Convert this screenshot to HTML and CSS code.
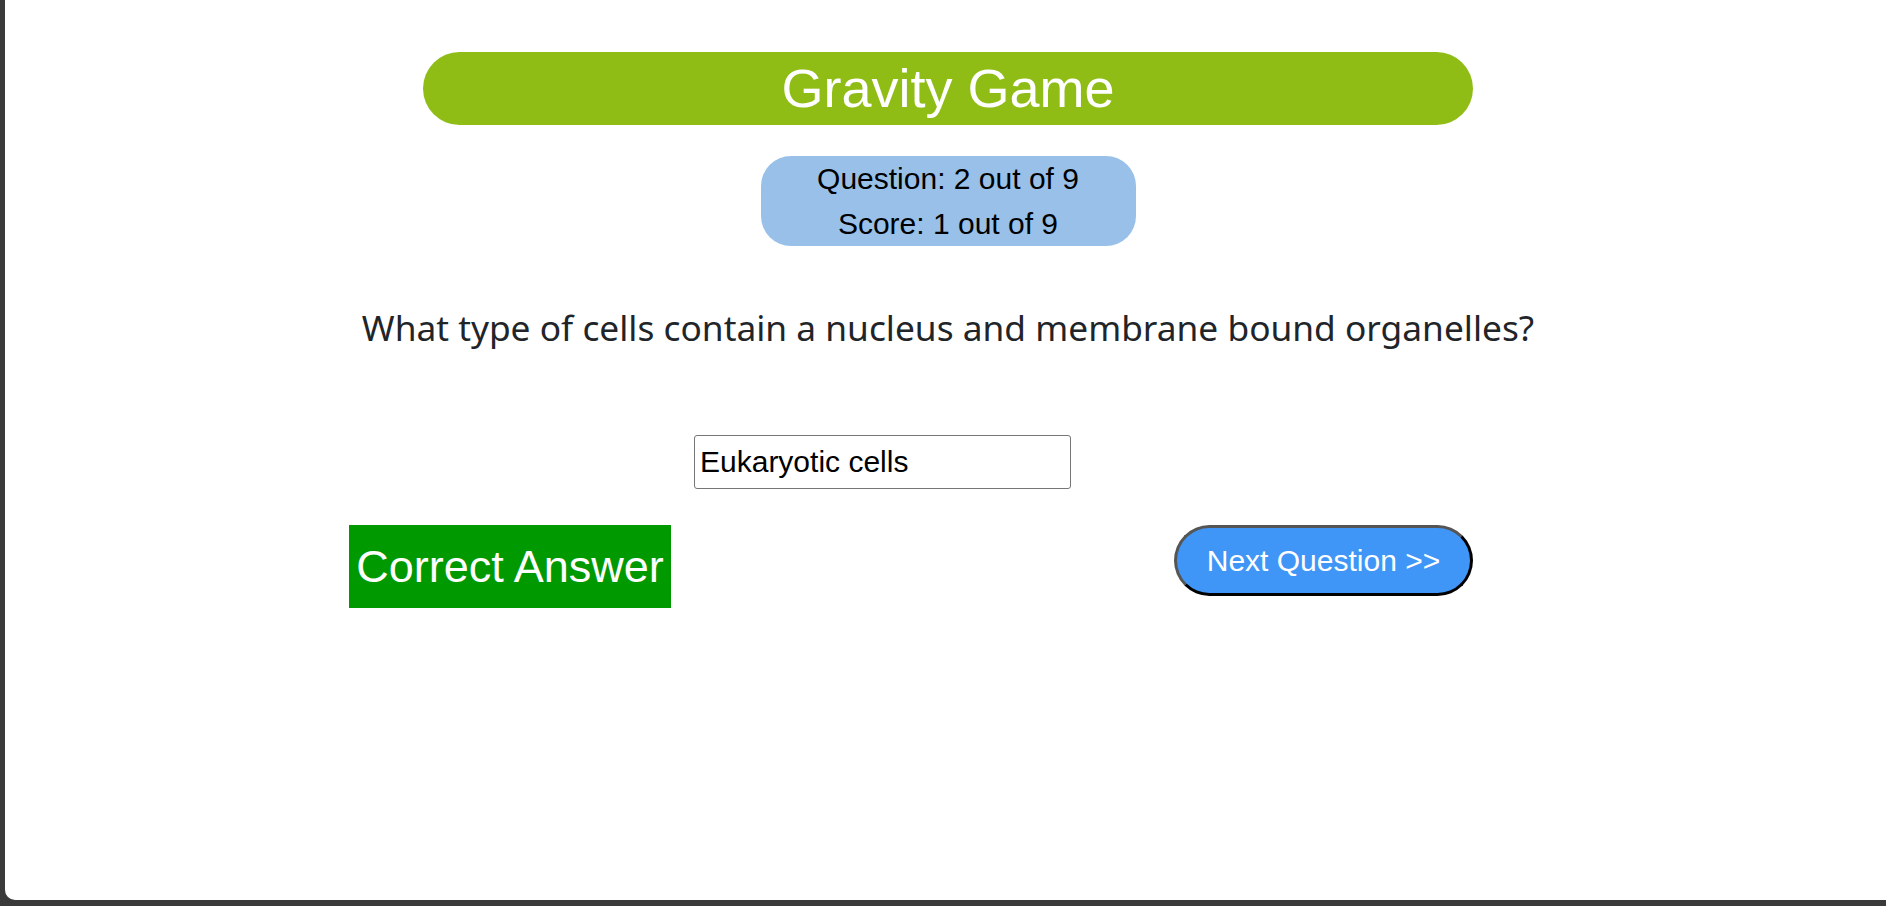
FILE: index.html
```html
<!DOCTYPE html>
<html lang="en">
<head>
<meta charset="utf-8">
<title>Gravity Game</title>
<link rel="stylesheet" href="styles.css">
</head>
<body>
<div class="frame">
  <h1 class="title">Gravity Game</h1>
  <div class="score">
    <div class="score-line">Question: 2 out of 9</div>
    <div class="score-line">Score: 1 out of 9</div>
  </div>
  <p class="question">What type of cells contain a nucleus and membrane bound organelles?</p>
  <div class="play">
    <div class="answer-row">
      <input class="answer" type="text" value="Eukaryotic cells">
    </div>
    <div class="actions">
      <div class="result">Correct Answer</div>
      <button class="next" type="button">Next Question &gt;&gt;</button>
    </div>
  </div>
</div>
</body>
</html>
```
FILE: styles.css
```css
html, body {
  margin: 0;
  padding: 0;
  background: #3a3a3a;
  overflow: hidden;
}

.frame {
  margin-left: 5px;
  height: 900px;
  padding-left: 5px;
  box-sizing: border-box;
  background: #ffffff;
  border-bottom-left-radius: 10px;
  overflow: hidden;
  font-family: "Liberation Sans", Arial, sans-serif;
}

.title {
  width: 1050px;
  height: 73px;
  margin: 52px auto 0;
  border-radius: 37px;
  background: #8fbd16;
  color: #ffffff;
  font-size: 54px;
  font-weight: normal;
  line-height: 73px;
  text-align: center;
}

.score {
  width: 375px;
  height: 90px;
  margin: 31px auto 0;
  border-radius: 30px;
  background: #98c0e8;
  color: #000000;
  font-size: 30px;
  line-height: 45px;
  text-align: center;
}

.question {
  margin: 0;
  padding-top: 46px;
  font-family: "Noto Sans", "Open Sans", sans-serif;
  font-size: 35.3px;
  line-height: 70px;
  color: #212529;
  text-align: center;
}

.play {
  width: 1124px;
  margin-left: 339px;
}

.answer-row {
  padding-top: 73px;
  padding-left: 345px;
  display: flex;
}

.answer {
  width: 377px;
  height: 54px;
  box-sizing: border-box;
  margin: 0;
  padding: 0 5px;
  border: 1px solid #767676;
  border-radius: 3px;
  font-family: "Liberation Sans", Arial, sans-serif;
  font-size: 30px;
  color: #000000;
  background: #ffffff;
}

.actions {
  margin-top: 36px;
  display: flex;
  justify-content: space-between;
  align-items: flex-start;
}

.result {
  width: 322px;
  height: 83px;
  box-sizing: border-box;
  background: #009900;
  color: #ffffff;
  font-size: 45px;
  line-height: 83px;
  text-align: center;
  white-space: nowrap;
}

.next {
  width: 299px;
  height: 71px;
  box-sizing: border-box;
  margin: 0;
  padding: 0;
  border: 3px solid;
  border-color: #555555 #000000 #000000 #555555;
  border-radius: 36px;
  background: #4096f7;
  color: #ffffff;
  font-family: "Liberation Sans", Arial, sans-serif;
  font-size: 30px;
  line-height: 65px;
  text-align: center;
}
```
